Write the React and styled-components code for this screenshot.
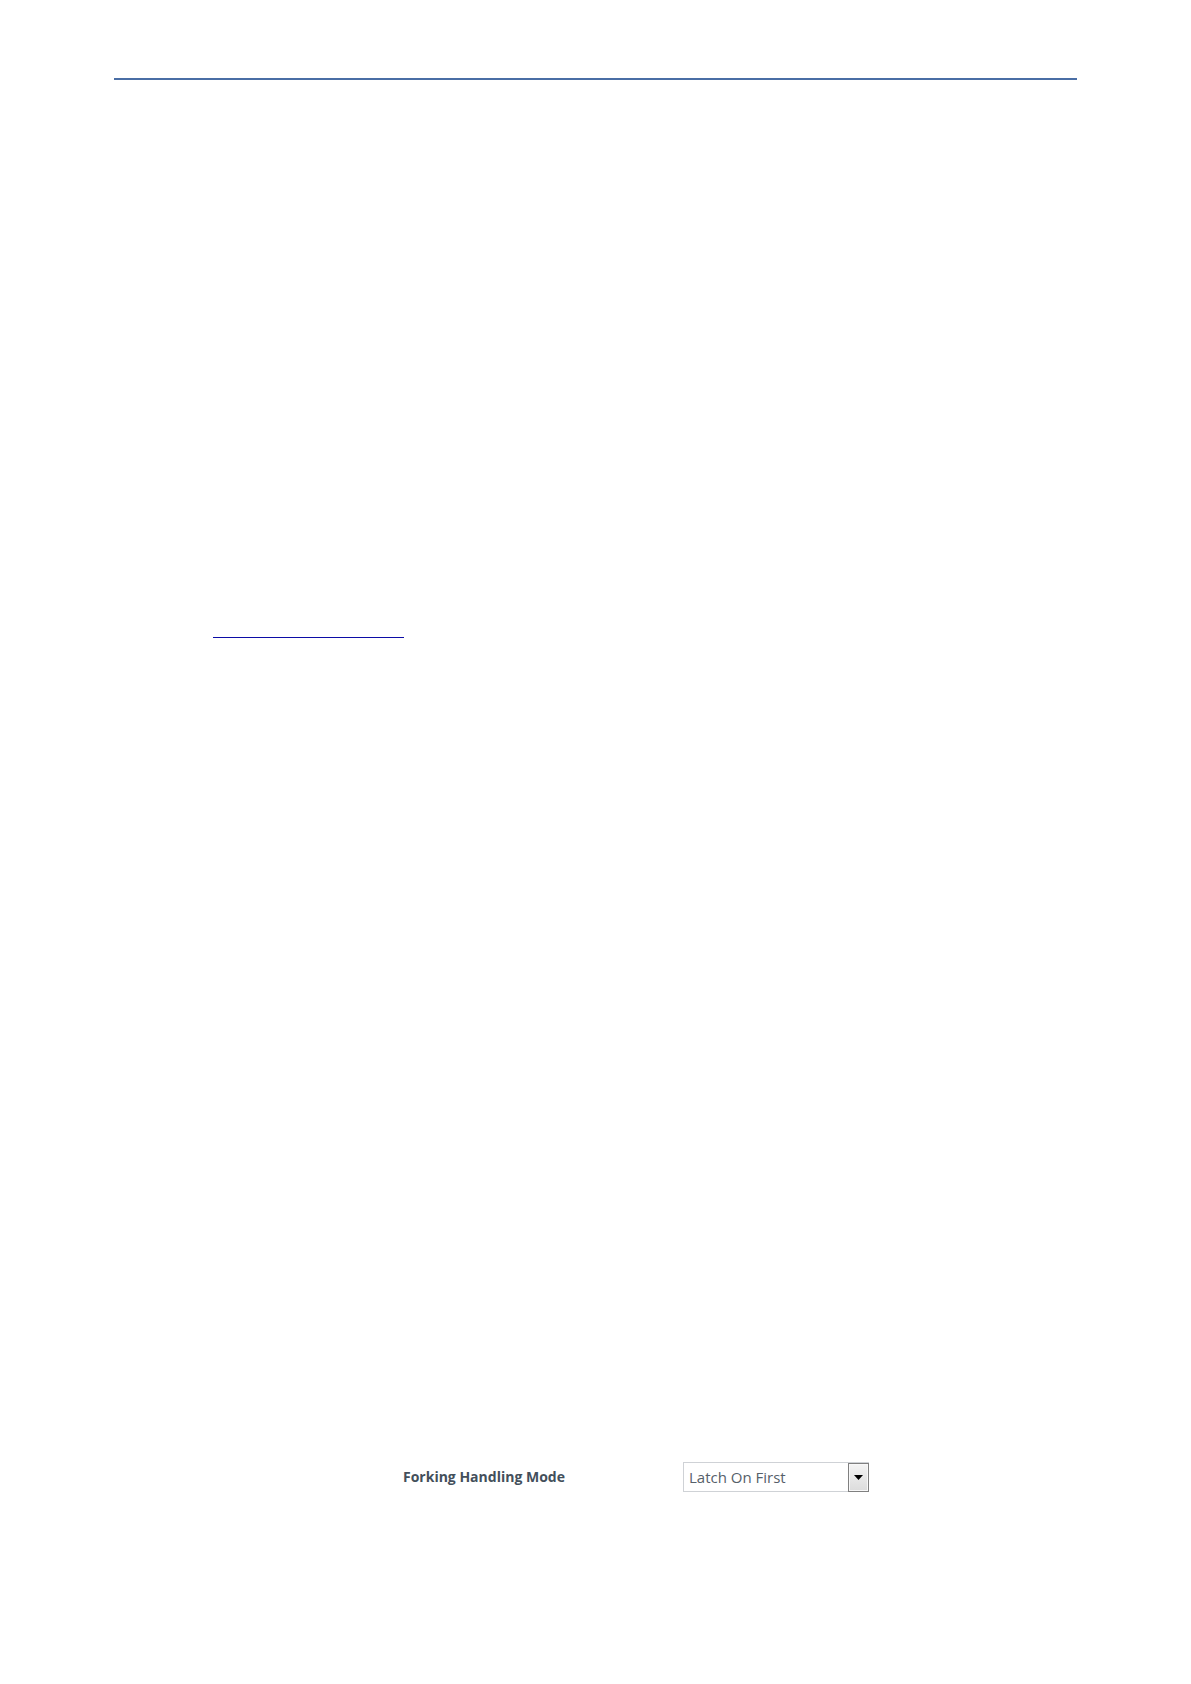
import { useState } from "react";
import styled, { createGlobalStyle } from "styled-components";

const colors = {
    headerRule: "#4a6ea5",
    sectionRule: "#0c0ca6",
    label: "#434f5b",
    value: "#56606a",
    fieldBorder: "#cfd2d6",
    arrowBorder: "#808080",
};

const GlobalStyle = createGlobalStyle`
    body {
        margin: 0;
        background: #ffffff;
        font-family: "Open Sans", "Noto Sans", sans-serif;
    }
`;

const Page = styled.main`
    padding: 78px 114px 192px;
`;

const HeaderRule = styled.hr`
    height: 2px;
    margin: 0;
    border: 0;
    background: ${colors.headerRule};
`;

const SectionRule = styled.hr`
    width: 191px;
    height: 1px;
    margin: 557px 0 0 99px;
    border: 0;
    background: ${colors.sectionRule};
`;

const SettingRow = styled.div`
    display: grid;
    grid-template-columns: 280px 186px;
    align-items: center;
    margin-top: 824px;
    padding-left: 289px;
`;

const SettingLabel = styled.label`
    color: ${colors.label};
    font-size: 14px;
    font-weight: 700;
    line-height: 20px;
`;

const SelectField = styled.div`
    position: relative;
    height: 30px;
`;

const Select = styled.select`
    box-sizing: border-box;
    width: 100%;
    height: 100%;
    margin: 0;
    padding: 0 24px 0 5px;
    border: 1px solid ${colors.fieldBorder};
    border-radius: 0;
    background: #ffffff;
    color: ${colors.value};
    font-family: inherit;
    font-size: 15px;
    appearance: none;
`;

const SelectArrow = styled.span`
    position: absolute;
    top: 1px;
    right: 0;
    bottom: 0;
    display: flex;
    align-items: center;
    justify-content: center;
    box-sizing: border-box;
    width: 21px;
    border: 1px solid ${colors.arrowBorder};
    background: linear-gradient(#f4f4f4, #dcdcdc);
    box-shadow: inset 0 0 0 1px #f8f8f8;
    pointer-events: none;
`;

const modes = ["Latch On First", "Sequential"];

export default function App() {
    const [mode, setMode] = useState(modes[0]);

    return (
        <>
            <GlobalStyle />
            <Page>
                <HeaderRule />
                <SectionRule />
                <SettingRow>
                    <SettingLabel htmlFor="forking-mode">
                        Forking Handling Mode
                    </SettingLabel>
                    <SelectField>
                        <Select
                            id="forking-mode"
                            value={mode}
                            onChange={(e) => setMode(e.target.value)}
                        >
                            {modes.map((name) => (
                                <option key={name}>{name}</option>
                            ))}
                        </Select>
                        <SelectArrow aria-hidden="true">
                            <svg width="9" height="5" viewBox="0 0 9 5">
                                <path d="M0 0h9L4.5 5z" fill="#000000" />
                            </svg>
                        </SelectArrow>
                    </SelectField>
                </SettingRow>
            </Page>
        </>
    );
}
